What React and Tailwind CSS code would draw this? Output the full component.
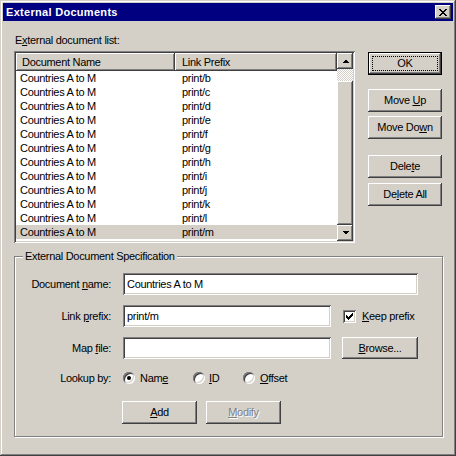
import React from "react";

// win2000 bevels
const raised =
  "shadow-[inset_-1px_-1px_#404040,inset_1px_1px_#ffffff,inset_-2px_-2px_#808080,inset_2px_2px_#d4d0c8]";
const sunken =
  "shadow-[inset_1px_1px_#808080,inset_-1px_-1px_#ffffff,inset_2px_2px_#404040,inset_-2px_-2px_#d4d0c8]";

const rows = ["b", "c", "d", "e", "f", "g", "h", "i", "j", "k", "l", "m"];

const closeBits = [
  "xx....xx",
  ".xx..xx.",
  "..xxxx..",
  "...xx...",
  "..xxxx..",
  ".xx..xx.",
  "xx....xx",
];

function CloseGlyph() {
  return (
    <svg width="8" height="7" shapeRendering="crispEdges">
      {closeBits.map((line, y) =>
        line.split("").map((c, x) =>
          c === "x" ? <rect key={`${x}-${y}`} x={x} y={y} width="1" height="1" fill="#000" /> : null
        )
      )}
    </svg>
  );
}

function Arrow({ up }) {
  return (
    <svg width="7" height="4" shapeRendering="crispEdges">
      <polygon points={up ? "0,4 3.5,0.5 7,4" : "0,0 3.5,3.5 7,0"} fill="#000" />
    </svg>
  );
}

function U({ children }) {
  return <span className="underline underline-offset-[1px]">{children}</span>;
}

function Btn({ children, className = "", disabled, def }) {
  return (
    <div
      className={`relative flex items-center justify-center bg-[#d4d0c8] ${
        def ? "border border-black" : ""
      } ${className}`}
    >
      <div className={`absolute ${def ? "inset-0" : "inset-0"} ${raised}`} />
      {def && <div className="absolute inset-[3px] border border-dotted border-black" />}
      <span
        className={`relative ${
          disabled ? "text-[#808080] [text-shadow:1px_1px_0_#ffffff]" : "text-black"
        }`}
      >
        {children}
      </span>
    </div>
  );
}

function Radio({ checked }) {
  return (
    <div
      className={`w-[12px] h-[12px] rounded-full bg-white flex items-center justify-center shadow-[inset_1px_1px_#808080,inset_-1px_-1px_#ffffff,inset_2px_2px_#404040,inset_-2px_-2px_#d4d0c8]`}
    >
      {checked && <div className="w-[4px] h-[4px] rounded-full bg-black" />}
    </div>
  );
}

export default function App() {
  return (
    <div className="w-[456px] h-[456px] bg-[#d4d0c8] p-[3px] font-['Liberation_Sans',Arial,sans-serif] text-[11px] tracking-[-0.3px] text-black shadow-[inset_-1px_-1px_#404040,inset_1px_1px_#d4d0c8,inset_-2px_-2px_#808080,inset_2px_2px_#ffffff]">
      {/* title bar */}
      <div className="h-[18px] bg-[#000080] flex items-center pl-[3px] pr-[2px]">
        <span className="text-white font-bold text-[11px] tracking-[0.3px]">External Documents</span>
        <div className={`ml-auto w-[16px] h-[14px] bg-[#d4d0c8] flex items-center justify-center ${raised}`}>
          <CloseGlyph />
        </div>
      </div>

      <div className="pl-[11px] flex">
        <div>
          <div className="mt-[13px] h-[13px] leading-[13px] pl-[1px]">
            E<U>x</U>ternal document list:
          </div>
          <div className={`mt-[4px] w-[341px] h-[192px] bg-white p-[2px] flex ${sunken}`}>
            <div className="flex-1 flex flex-col">
              <div className="h-[18px] flex">
                <div className={`w-[159px] bg-[#d4d0c8] pl-[6px] flex items-center ${raised}`}>Document Name</div>
                <div className={`flex-1 bg-[#d4d0c8] pl-[7px] flex items-center ${raised}`}>Link Prefix</div>
              </div>
              {rows.map((r) => (
                <div
                  key={r}
                  className={`h-[14px] flex items-center ${r === "m" ? "bg-[#d4d0c8]" : ""}`}
                >
                  <div className="w-[159px] pl-[4px]">Countries A to M</div>
                  <div className="pl-[7px]">print/{r}</div>
                </div>
              ))}
            </div>
            <div className="w-[16px] flex flex-col">
              <div className={`h-[16px] bg-[#d4d0c8] flex items-center justify-center ${raised}`}>
                <Arrow up />
              </div>
              <div className="flex-1 flex flex-col bg-[repeating-conic-gradient(#ffffff_0%_25%,#d4d0c8_0%_50%)] bg-[length:2px_2px]">
                <div className={`mt-[12px] flex-1 bg-[#d4d0c8] ${raised}`} />
              </div>
              <div className={`h-[16px] bg-[#d4d0c8] flex items-center justify-center ${raised}`}>
                <Arrow />
              </div>
            </div>
          </div>
        </div>

        <div className="ml-[13px] mt-[31px] flex flex-col w-[74px]">
          <Btn def className="h-[23px]">OK</Btn>
          <Btn className="h-[23px] mt-[14px]">
            Move <U>U</U>p
          </Btn>
          <Btn className="h-[23px] mt-[4px]">
            Move Do<U>w</U>n
          </Btn>
          <Btn className="h-[23px] mt-[16px]">
            Dele<U>t</U>e
          </Btn>
          <Btn className="h-[23px] mt-[5px]">
            De<U>l</U>ete All
          </Btn>
        </div>
      </div>

      {/* group box */}
      <div className="ml-[11px] mt-[13px] w-[429px] h-[181px] relative border border-[#808080] shadow-[1px_1px_0_#ffffff,inset_1px_1px_0_#ffffff]">
        <div className="absolute left-[8px] -top-[7px] px-[2px] bg-[#d4d0c8] leading-[13px]">
          External Document Specification
        </div>

        <div className="mt-[16px] h-[22px] flex items-center">
          <div className="w-[96px] text-right">
            Document <U>n</U>ame:
          </div>
          <div className={`ml-[12px] w-[295px] h-[22px] bg-white pl-[4px] flex items-center ${sunken}`}>
            Countries A to M
          </div>
        </div>

        <div className="mt-[10px] h-[22px] flex items-center">
          <div className="w-[96px] text-right">
            Link <U>p</U>refix:
          </div>
          <div className={`ml-[12px] w-[208px] h-[22px] bg-white pl-[4px] flex items-center ${sunken}`}>
            print/m
          </div>
          <div className={`ml-[12px] w-[13px] h-[13px] bg-white flex items-center justify-center ${sunken}`}>
            <svg width="7" height="7" shapeRendering="crispEdges">
              <path d="M0 2h1v1h1v1h1v-1h1v-1h1v-1h1v-1h1v3h-1v1h-1v1h-1v1h-1v1h-1v-1h-1v-1h-1z" fill="#000" />
            </svg>
          </div>
          <div className="ml-[6px]">
            <U>K</U>eep prefix
          </div>
        </div>

        <div className="mt-[10px] h-[22px] flex items-center">
          <div className="w-[96px] text-right">
            Map <U>f</U>ile:
          </div>
          <div className={`ml-[12px] w-[208px] h-[22px] bg-white ${sunken}`} />
          <Btn className="ml-[11px] w-[76px] h-[22px]">
            <U>B</U>rowse...
          </Btn>
        </div>

        <div className="mt-[12px] h-[14px] flex items-center">
          <div className="w-[96px] text-right">Lookup by:</div>
          <div className="ml-[12px] w-[70px] flex items-center">
            <Radio checked />
            <span className="ml-[5px]">
              Nam<U>e</U>
            </span>
          </div>
          <div className="w-[50px] flex items-center">
            <Radio />
            <span className="ml-[4px]">
              <U>I</U>D
            </span>
          </div>
          <div className="flex items-center">
            <Radio />
            <span className="ml-[5px]">
              <U>O</U>ffset
            </span>
          </div>
        </div>

        <div className="mt-[16px] ml-[107px] flex">
          <Btn className="w-[75px] h-[23px]">
            <U>A</U>dd
          </Btn>
          <Btn disabled className="ml-[9px] w-[75px] h-[23px]">
            <U>M</U>odify
          </Btn>
        </div>
      </div>
    </div>
  );
}
